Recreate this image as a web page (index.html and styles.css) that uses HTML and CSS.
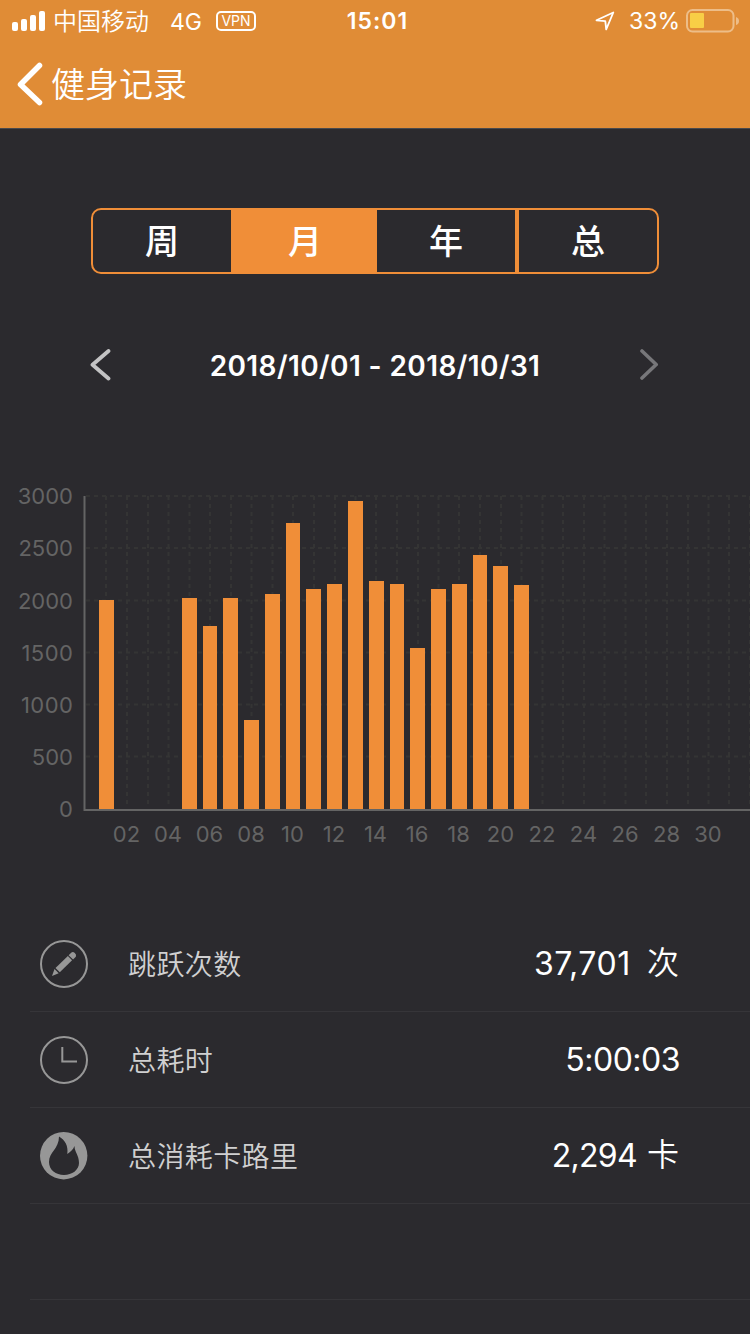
FILE: index.html
```html
<!DOCTYPE html>
<html lang="zh-CN">
<head>
<meta charset="utf-8">
<title>健身记录</title>
<link rel="stylesheet" href="styles.css">
</head>
<body>
<div class="screen">
  <header class="header">
    <div class="status">
      <div class="status-left">
        <svg class="signal" width="33" height="20" viewBox="0 0 33 20" fill="#fff"><rect x="0" y="11" width="6" height="9" rx="2"/><rect x="9" y="8" width="6" height="12" rx="2"/><rect x="18" y="4" width="6" height="16" rx="2"/><rect x="27" y="0" width="6" height="20" rx="2"/></svg>
        <span class="carrier">中国移动</span>
        <span class="network">4G</span>
        <span class="vpn">VPN</span>
      </div>
      <span class="time">15:01</span>
      <div class="status-right">
        <svg class="location" width="20" height="20" viewBox="0 0 20 20" fill="none" stroke="#fff" stroke-width="1.8" stroke-linejoin="round"><path d="M1.500 9.300 18.300 1.500 11.200 18.300 10.300 10.200Z"/></svg>
        <span class="percent">33%</span>
        <svg class="battery" width="54" height="24" viewBox="0 0 54 24"><rect x="1" y="1" width="46.500" height="21.500" rx="5.500" fill="none" stroke="#edbd88" stroke-width="2"/><rect x="4" y="4" width="14" height="15" rx="1" fill="#f8ce46"/><path d="M50 8q3 1 3 4t-3 4z" fill="#edbd88"/></svg>
      </div>
    </div>
    <div class="nav">
      <svg class="back" width="28" height="44" viewBox="0 0 28 44" fill="none" stroke="#fff" stroke-width="5.500" stroke-linecap="round" stroke-linejoin="round"><path d="M22.500 3.500 3.500 22.500 22.500 40.500"/></svg>
      <h1 class="title">健身记录</h1>
    </div>
  </header>

  <div class="tabs">
    <button class="tab">周</button>
    <button class="tab tab-on">月</button>
    <button class="tab">年</button>
    <button class="tab">总</button>
  </div>

  <div class="range">
    <svg class="arrow" width="22" height="32" viewBox="0 0 22 32" fill="none" stroke="#c3c3c4" stroke-width="3.800" stroke-linecap="round" stroke-linejoin="round"><path d="M18.500 2 2.500 15.800 18.500 29.500"/></svg>
    <span class="dates">2018/10/01 - 2018/10/31</span>
    <svg class="arrow" width="22" height="32" viewBox="0 0 22 32" fill="none" stroke="#77777a" stroke-width="3.600" stroke-linecap="round" stroke-linejoin="round"><path d="M4 2 18.200 15.500 4 29"/></svg>
  </div>

  <svg class="chart" width="750" height="380" viewBox="0 480 750 380">
    <path class="grid" d="M86 496H750M86 548H750M86 600.500H750M86 652.500H750M86 704.500H750M86 756.500H750"/>
    <path class="grid" d="M106 496V808M127 496V808M148 496V808M168.500 496V808M189.500 496V808M210 496V808M231 496V808M251.500 496V808M272.500 496V808M293 496V808M314 496V808M335 496V808M355.500 496V808M376 496V808M397 496V808M418 496V808M438.500 496V808M459 496V808M480 496V808M501 496V808M521.500 496V808M542.500 496V808M563 496V808M584 496V808M604.500 496V808M625.500 496V808M646 496V808M667 496V808M688 496V808M708.500 496V808M729 496V808M750 496V808"/>
    <path class="axis" d="M84.500 496V810H750"/>
    <g class="bars">
      <rect x="99" y="600" width="15" height="209"/>
      <rect x="182" y="598" width="15" height="211"/>
      <rect x="203" y="626" width="14" height="183"/>
      <rect x="223" y="598" width="15" height="211"/>
      <rect x="244" y="720" width="15" height="89"/>
      <rect x="265" y="594" width="15" height="215"/>
      <rect x="286" y="523" width="14" height="286"/>
      <rect x="306" y="589" width="15" height="220"/>
      <rect x="327" y="584" width="15" height="225"/>
      <rect x="348" y="501" width="15" height="308"/>
      <rect x="369" y="581" width="15" height="228"/>
      <rect x="390" y="584" width="14" height="225"/>
      <rect x="410" y="648" width="15" height="161"/>
      <rect x="431" y="589" width="15" height="220"/>
      <rect x="452" y="584" width="15" height="225"/>
      <rect x="473" y="555" width="14" height="254"/>
      <rect x="493" y="566" width="15" height="243"/>
      <rect x="514" y="585" width="15" height="224"/>
    </g>
    <g class="labels y-labels">
      <text x="73" y="504">3000</text><text x="73" y="556">2500</text><text x="73" y="609">2000</text><text class="wide" x="73.500" y="661">1500</text><text class="wide" x="73.500" y="713">1000</text><text x="73" y="765">500</text><text x="73" y="817">0</text>
    </g>
    <g class="labels x-labels">
      <text x="126.500" y="842">02</text><text x="168" y="842">04</text><text x="209.500" y="842">06</text><text x="251" y="842">08</text><text x="292.500" y="842">10</text><text x="334" y="842">12</text><text x="375.500" y="842">14</text><text x="417" y="842">16</text><text x="458.500" y="842">18</text><text x="500.500" y="842">20</text><text x="542" y="842">22</text><text x="583.500" y="842">24</text><text x="625" y="842">26</text><text x="666.500" y="842">28</text><text x="708" y="842">30</text>
    </g>
  </svg>

  <ul class="stats">
    <li class="stat">
      <svg class="icon" width="48" height="48" viewBox="0 0 48 48"><circle cx="24" cy="24" r="23" fill="none" stroke="#979797" stroke-width="2"/><g fill="#979797"><path d="M12 36 14.500 29 18.700 33.200Z"/><path d="M15.500 27.900 27.900 16 32.100 20.300 19.800 32.300Z"/><path d="M28.600 15.200 31.200 12.700Q32.800 11.200 34.800 13T35.800 16.800L33.100 19.500Z"/></g></svg>
      <span class="name">跳跃次数</span>
      <span class="value"><span class="count jumps">37,701</span><span class="unit">次</span></span>
    </li>
    <li class="stat">
      <svg class="icon" width="48" height="48" viewBox="0 0 48 48" fill="none" stroke="#979797" stroke-width="2"><circle cx="24" cy="24" r="23"/><path d="M22.300 11V25.500H37"/></svg>
      <span class="name">总耗时</span>
      <span class="value duration">5:00:03</span>
    </li>
    <li class="stat">
      <svg class="icon" width="48" height="48" viewBox="0 0 48 48"><circle cx="23.700" cy="23.700" r="23.700" fill="#979797"/><path fill="#2b2a2e" d="M19 4.500C25 8 28.500 14 27.300 22 30 20 33 18 34.500 14 34.500 20 39 23 39 31 39 38 32 43 24 43S9 38 9 30C9 20 19 17 19 4.500Z"/></svg>
      <span class="name">总消耗卡路里</span>
      <span class="value"><span class="count calories">2,294</span><span class="unit">卡</span></span>
    </li>
    <li class="stat"></li>
  </ul>
</div>
</body>
</html>
```

FILE: styles.css
```css
* { box-sizing: border-box; }

body {
  margin: 0;
  background: #2b2a2e;
  font-family: Inter, "Noto Sans CJK SC", sans-serif;
  color: #fff;
}

.screen {
  display: flex;
  flex-direction: column;
  width: 750px;
  height: 1334px;
  overflow: hidden;
}

.header {
  flex: none;
  height: 129px;
  background: #e08c36;
  border-bottom: 1px solid #49494c;
}

.status {
  display: grid;
  grid-template-columns: 1fr auto 1fr;
  align-items: center;
  height: 40px;
  padding: 0 10px 0 12px;
  font-size: 23px;
  line-height: 40px;
  white-space: nowrap;
}

.status-left,
.status-right { display: flex; align-items: center; }
.status-right { justify-content: flex-end; }

.carrier { margin: 2px 0 0 8px; font-size: 24px; font-weight: 350; }
.network { margin: 1px 0 0 21px; }

.vpn {
  width: 40px;
  height: 20px;
  margin-left: 14px;
  border: 2px solid #fff;
  border-radius: 5px;
  font-size: 14px;
  line-height: 16px;
  text-align: center;
}

.time { padding: 0 0 0 3px; font-weight: 600; letter-spacing: 1px; }
.location { margin-right: 14px; }
.percent { margin: 0 6px 0 0; }

.nav { display: flex; align-items: center; height: 88px; padding-left: 17px; }
.title { margin: 2px 0 0 6px; font-size: 34px; font-weight: 350; line-height: 48px; }

.tabs { flex: none; display: flex; width: 568px; height: 66px; margin: 79px auto 0; }

.tab {
  flex: 0 0 142px;
  padding: 0 0 3px;
  border: 2px solid #f08e38;
  background: none;
  color: #fff;
  font: 500 34px/58px "Noto Sans CJK SC", sans-serif;
}
.tab:first-child { border-radius: 10px 0 0 10px; }
.tab:last-child { border-radius: 0 10px 10px 0; }
.tab-on { padding-left: 2px; background: #f08e38; box-shadow: -2px 0 #f08e38, 2px 0 #f08e38; }

.range {
  flex: none;
  display: flex;
  justify-content: space-between;
  align-items: center;
  height: 60px;
  margin: 61px 90px 0;
}
.dates { padding-top: 1px; font-size: 28px; font-weight: 600; letter-spacing: 0.4px; }

.chart { flex: none; display: block; margin-top: 85px; }
.grid { fill: none; stroke: #343434; stroke-width: 2; stroke-dasharray: 4 4; }
.axis { fill: none; stroke: #646464; stroke-width: 2; }
.bars { fill: #f08e38; }
.labels { fill: #646464; font-size: 22px; }
.wide { letter-spacing: 0.5px; }
.y-labels { text-anchor: end; }
.x-labels { text-anchor: middle; }

.stats { flex: none; margin: 56px 0 0 30px; padding: 0; list-style: none; }

.stat {
  display: flex;
  align-items: center;
  height: 96px;
  padding: 0 70px 0 10px;
  border-bottom: 1px solid #363539;
}
.name { margin: -1px 0 0 40px; color: #d0d0d1; font-size: 28px; font-weight: 350; letter-spacing: 0.4px; }
.value { display: flex; align-items: center; margin-left: auto; font-size: 32px; }
.duration { letter-spacing: -0.5px; }
.jumps { letter-spacing: 0.6px; }
.calories { letter-spacing: -0.7px; }
.unit { margin: -7px 1px 0 16px; font-weight: 350; }
.calories + .unit { margin-left: 10px; }
```
